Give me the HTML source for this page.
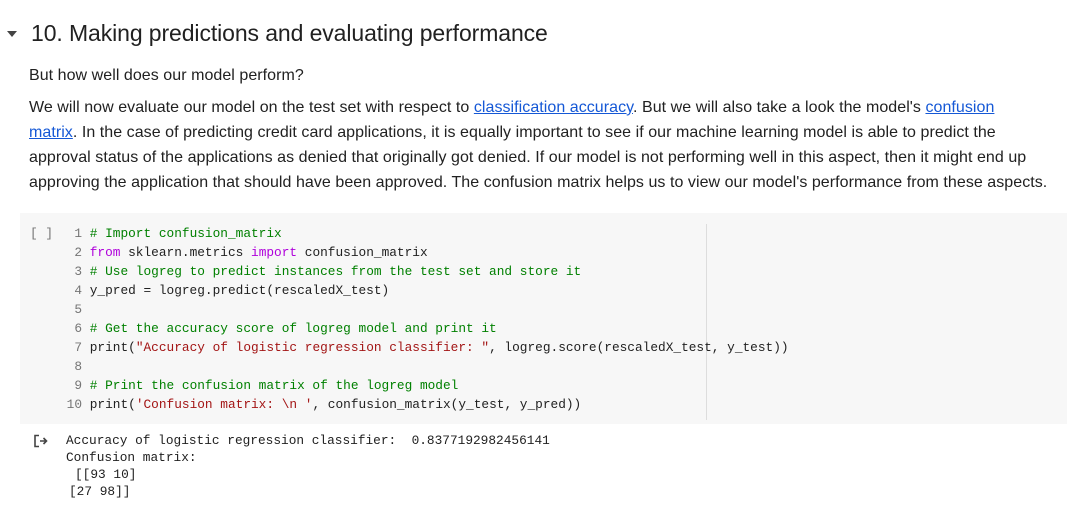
<!DOCTYPE html>
<html><head><style>
body{margin:0;width:1067px;height:525px;background:#fff;font-family:"Liberation Sans",sans-serif;color:#212121;position:relative;overflow:hidden}
.a{position:absolute;white-space:nowrap}
h1{position:absolute;left:31px;top:20px;margin:0;font-weight:normal;font-size:23px;letter-spacing:-0.1px;white-space:nowrap}
.p{position:absolute;left:29px;font-size:16px;letter-spacing:0.05px;white-space:nowrap;color:#212121}
a{text-decoration:underline;color:#1558d6}
.cell{position:absolute;left:20px;top:213px;width:1047px;height:211px;background:#f7f7f7}
.code{position:absolute;font-family:"Liberation Mono",monospace;font-size:12.8px;line-height:19px;white-space:pre;color:#212121}
.ln{color:#757575}
.c{color:#008000}.k{color:#af00db}.s{color:#a31515}
.out{position:absolute;font-family:"Liberation Mono",monospace;font-size:12.8px;line-height:17px;white-space:pre;color:#212121}
</style></head><body>
<svg class="a" style="left:6px;top:30px" width="12" height="8"><path d="M1 1 L11 1 L6 7Z" fill="#444"/></svg>
<h1>10. Making predictions and evaluating performance</h1>
<div class="p" style="top:67px">But how well does our model perform?</div>
<div class="p" style="top:99px">We will now evaluate our model on the test set with respect to <a>classification accuracy</a>. But we will also take a look the model's <a>confusion</a></div>
<div class="p" style="top:124px"><a>matrix</a>. In the case of predicting credit card applications, it is equally important to see if our machine learning model is able to predict the</div>
<div class="p" style="top:149px">approval status of the applications as denied that originally got denied. If our model is not performing well in this aspect, then it might end up</div>
<div class="p" style="top:174px">approving the application that should have been approved. The confusion matrix helps us to view our model's performance from these aspects.</div>
<div class="cell"></div>
<div class="code" style="left:30px;top:224px;color:#757575">[ ]</div>
<div class="a" style="left:706px;top:224px;width:1px;height:196px;background:#ddd"></div>
<div class="code" style="left:59px;top:224px"><span class="ln">  1</span> <span class="c"># Import confusion_matrix</span>
<span class="ln">  2</span> <span class="k">from</span> sklearn.metrics <span class="k">import</span> confusion_matrix
<span class="ln">  3</span> <span class="c"># Use logreg to predict instances from the test set and store it</span>
<span class="ln">  4</span> y_pred = logreg.predict(rescaledX_test)
<span class="ln">  5</span>
<span class="ln">  6</span> <span class="c"># Get the accuracy score of logreg model and print it</span>
<span class="ln">  7</span> print(<span class="s">"Accuracy of logistic regression classifier: "</span>, logreg.score(rescaledX_test, y_test))
<span class="ln">  8</span>
<span class="ln">  9</span> <span class="c"># Print the confusion matrix of the logreg model</span>
<span class="ln"> 10</span> print(<span class="s">'Confusion matrix: \n '</span>, confusion_matrix(y_test, y_pred))</div>
<svg class="a" style="left:33px;top:434px" width="16" height="14"><path d="M6 1.5 H2 V12.5 H6" fill="none" stroke="#444" stroke-width="1.6"/><path d="M7 7 H13 M10.5 4 L13.5 7 L10.5 10" fill="none" stroke="#444" stroke-width="1.6"/></svg>
<div class="out" style="left:66px;top:432px">Accuracy of logistic regression classifier:  0.8377192982456141
Confusion matrix:</div>
<div class="out" style="left:75px;top:466px">[[93 10]</div>
<div class="out" style="left:69px;top:483px">[27 98]]</div>
</body></html>
